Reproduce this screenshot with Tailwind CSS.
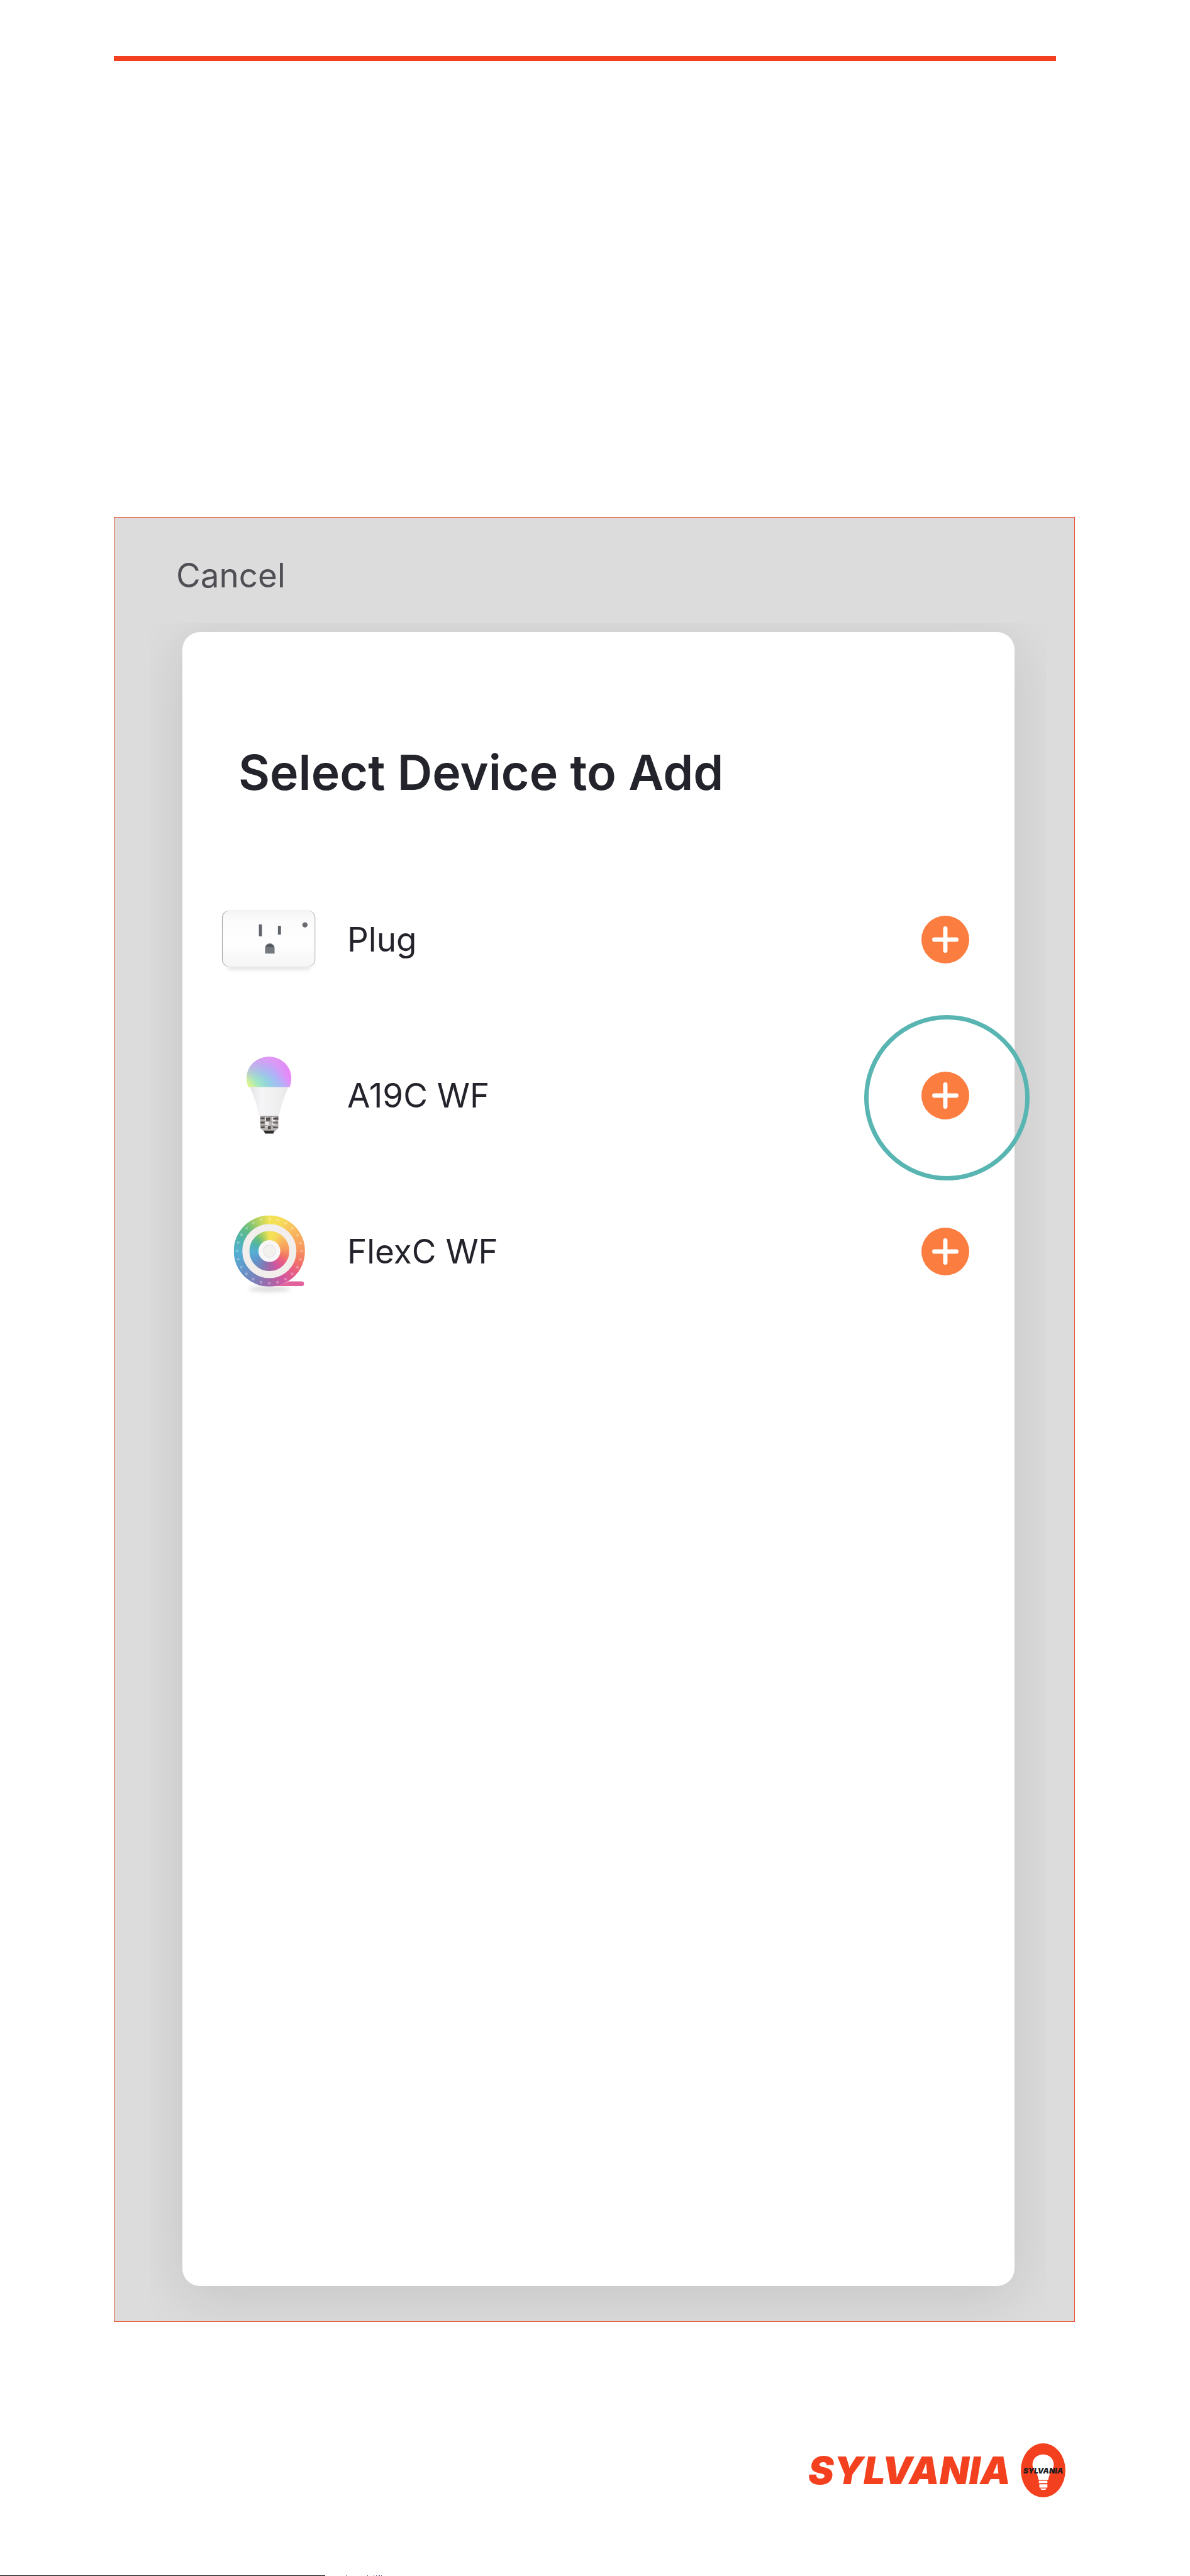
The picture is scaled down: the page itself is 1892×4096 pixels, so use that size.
<!DOCTYPE html>
<html lang="en">
<head>
    <meta charset="UTF-8">
    <meta name="viewport" content="width=device-width, initial-scale=1.0">
    <title>Select Device to Add</title>
    <script src="https://cdn.jsdelivr.net/npm/@tailwindcss/browser@4"></script>
</head>
<body class="bg-white font-['Inter',sans-serif] text-[#23232b]">
    <div class="min-h-screen flex flex-col">
        <!-- Page rule -->
        <div class="mt-[89px] ml-[181px] mr-[213px] h-2 bg-[#f3401e]"></div>

        <!-- App screen -->
        <main class="mt-[725px] ml-[181px] mr-[183px] flex-1 flex flex-col border border-[#f0492a] bg-[#dcdcdc]">
            <header class="pt-[60px] pb-[44px] pl-[98px]">
                <button type="button" class="block text-[53px] leading-[64px] text-[#4e4f54]">Cancel</button>
            </header>

            <div class="flex-1 flex flex-col ml-[57px] mr-[44px] pt-[14px] pb-[56px] pl-[51px] pr-[51px] overflow-hidden">
                <section class="flex-1 rounded-[28px] bg-white pt-[175px] shadow-[0_16px_90px_rgba(0,0,0,0.11)]">
                    <h1 class="pl-[89px] text-[77px] leading-[96px] font-semibold">Select Device to Add</h1>

                    <ul class="mt-[94px] pl-[62px] pr-[72px]">
                        <li class="h-[248px] flex items-center">
                            <svg class="w-[151px] h-[182px] shrink-0" viewBox="0 0 200 240" aria-hidden="true">
                                <defs>
                                    <linearGradient id="plugBody" x1="0" y1="0" x2="0" y2="1">
                                        <stop offset="0" stop-color="#f5f5f5"/>
                                        <stop offset="0.2" stop-color="#fcfcfc"/>
                                        <stop offset="0.6" stop-color="#fefefe"/>
                                        <stop offset="1" stop-color="#f5f5f5"/>
                                    </linearGradient>
                                    <linearGradient id="plugEdge" x1="0" y1="0" x2="1" y2="0">
                                        <stop offset="0" stop-color="#a9a9ab"/>
                                        <stop offset="0.08" stop-color="#f0f0f0"/>
                                        <stop offset="0.92" stop-color="#f0f0f0"/>
                                        <stop offset="1" stop-color="#bdbdbf"/>
                                    </linearGradient>
                                    <filter id="soft" x="-20%" y="-100%" width="140%" height="300%">
                                        <feGaussianBlur stdDeviation="4"/>
                                    </filter>
                                </defs>
                                <rect x="12" y="164" width="176" height="20" rx="8" fill="#e4e4e4" filter="url(#soft)"/>
                                <rect x="2" y="59" width="195" height="118" rx="15" fill="url(#plugBody)" stroke="url(#plugEdge)" stroke-width="1.6"/>
                                <rect x="79" y="88" width="6.5" height="25" fill="#62656c"/>
                                <rect x="119" y="91" width="6.5" height="18.5" fill="#62656c"/>
                                <path d="M92 149.500V138a10 10 0 0 1 20 0v11.500z" fill="#747980"/>
                                <path d="M93 136a9.500 9.500 0 0 1 18 0z" fill="#55585e"/>
                                <circle cx="176" cy="89" r="5.500" fill="#696b70"/>
                            </svg>
                            <span class="pl-[49px] flex-1 text-[53px] leading-[64px]">Plug</span>
                            <button type="button" aria-label="Add Plug" class="size-[76px] shrink-0">
                                <svg class="size-full" viewBox="0 0 100 100">
                                    <circle cx="50" cy="50" r="50" fill="#fb7d40"/>
                                    <path d="M50 27v46M27 50h46" stroke="#fff" stroke-width="9" stroke-linecap="round"/>
                                </svg>
                            </button>
                        </li>

                        <li class="h-[248px] flex items-center">
                            <svg class="w-[151px] h-[182px] shrink-0" viewBox="0 0 200 240" aria-hidden="true">
                                <defs>
                                    <linearGradient id="dome" x1="0" y1="0.85" x2="1" y2="0.4">
                                        <stop offset="0" stop-color="#dcf58c"/>
                                        <stop offset="0.2" stop-color="#a0e6c4"/>
                                        <stop offset="0.4" stop-color="#94d0e2"/>
                                        <stop offset="0.6" stop-color="#a9b6f7"/>
                                        <stop offset="0.8" stop-color="#df92fa"/>
                                        <stop offset="1" stop-color="#f478f4"/>
                                    </linearGradient>
                                    <linearGradient id="domeTop" x1="0.4" y1="0" x2="0.55" y2="0.7">
                                        <stop offset="0" stop-color="#e795f2" stop-opacity="0.9"/>
                                        <stop offset="1" stop-color="#c3a5f7" stop-opacity="0"/>
                                    </linearGradient>
                                    <linearGradient id="neck" x1="0" y1="0" x2="1" y2="0">
                                        <stop offset="0" stop-color="#e6e4e7"/>
                                        <stop offset="0.3" stop-color="#f5f4f6"/>
                                        <stop offset="0.7" stop-color="#f0eff0"/>
                                        <stop offset="1" stop-color="#e9e8e9"/>
                                    </linearGradient>
                                </defs>
                                <path d="M60 101h81c-2 8-6 15-9 24-4 11-8 25-11 38H79c-2-14-6-29-11-41-3-8-6-14-8-21z" fill="url(#neck)"/>
                                <path d="M56.500 102C50 84 53 66 64 54c20-21 53-21 72 0 12 13 14 32 8 48z" fill="url(#dome)"/>
                                <path d="M56.500 102C50 84 53 66 64 54c20-21 53-21 72 0 12 13 14 32 8 48z" fill="url(#domeTop)"/>
                                <path d="M82 163h38v26l-8 7H90l-8-7z" fill="#b9b6b4"/>
                                <path d="M92 163h8v23h-8zM107 163h6v19h-6z" fill="#eceaea"/>
                                <path d="M82 166h9v4h-9zM94 166h9v7h-9zM109 166h11v5h-11zM82 175h9v4h-9zM109 175h10v4h-10zM83 185h8v4h-8zM98 184h6v7h-6zM109 185h10v4h-10z" fill="#55504f"/>
                                <path d="M82 164h38M82 173l37 4M82 182l37 4" stroke="#8c8987" stroke-width="1.500"/>
                                <path d="M89 194h23l-3 6H92z" fill="#302c2c"/>
                            </svg>
                            <span class="pl-[49px] flex-1 text-[53px] leading-[64px]">A19C WF</span>
                            <div class="relative size-[76px] shrink-0">
                                <button type="button" aria-label="Add A19C WF" class="block size-full">
                                    <svg class="size-full" viewBox="0 0 100 100">
                                        <circle cx="50" cy="50" r="50" fill="#fb7d40"/>
                                        <path d="M50 27v46M27 50h46" stroke="#fff" stroke-width="9" stroke-linecap="round"/>
                                    </svg>
                                </button>
                                <!-- Callout ring -->
                                <div class="absolute -left-[91px] -top-[90px] size-[263px] rounded-full border-[7px] border-[#58b5b2] pointer-events-none"></div>
                            </div>
                        </li>

                        <li class="h-[248px] flex items-center">
                            <svg class="w-[151px] h-[182px] shrink-0" viewBox="0 0 200 240" aria-hidden="true">
                                <ellipse cx="101" cy="199" rx="44" ry="6" fill="#dcdcdc" filter="url(#soft)"/>
                                <foreignObject x="26" y="44" width="150" height="150">
                                    <div class="size-full rounded-full bg-[conic-gradient(#f4e353_0deg,#f7d95a_25deg,#f9b95e_50deg,#f7985c_85deg,#f27468_110deg,#e65c84_130deg,#d2569f_153deg,#a465a8_178deg,#7d7db8_205deg,#5f98cb_238deg,#54afd3_268deg,#4fb4ad_292deg,#63bb82_314deg,#a9cf63_336deg,#f4e353_360deg)]"></div>
                                </foreignObject>
                                <circle cx="101" cy="119" r="68" fill="none" stroke="#fff" stroke-opacity="0.28" stroke-width="6" stroke-linecap="round" stroke-dasharray="0 17.800"/>
                                <circle cx="101" cy="119" r="49.500" fill="none" stroke="#f1eeeb" stroke-width="15"/>
                                <circle cx="101" cy="119" r="23" fill="#f8f6f7"/>
                                <circle cx="101" cy="119" r="13" fill="#f3f1ee" stroke="#e3e1e3" stroke-width="1.500"/>
                                <path d="M112 193c12-2 22-6 30-10h27a5 5 0 0 1 0 10z" fill="#e2629b"/>
                            </svg>
                            <span class="pl-[49px] flex-1 text-[53px] leading-[64px]">FlexC WF</span>
                            <button type="button" aria-label="Add FlexC WF" class="size-[76px] shrink-0">
                                <svg class="size-full" viewBox="0 0 100 100">
                                    <circle cx="50" cy="50" r="50" fill="#fb7d40"/>
                                    <path d="M50 27v46M27 50h46" stroke="#fff" stroke-width="9" stroke-linecap="round"/>
                                </svg>
                            </button>
                        </li>
                    </ul>
                </section>
            </div>
        </main>

        <!-- Brand -->
        <footer class="mt-[193px]">
            <div class="mr-[198px] flex justify-end items-center gap-4">
                <span class="text-[61px] leading-[64px] font-black italic text-[#f3401e]">SYLVANIA</span>
                <svg class="w-[71px] h-[86px] shrink-0" viewBox="0 0 94 114">
                    <ellipse cx="47" cy="57" rx="47" ry="57" fill="#f3401e"/>
                    <path d="M47 23.500c13 0 22.500 9 22.500 22 0 7-5 12-8 18-2 5-3 9-4 13.500h-20c-1-4.500-2-8.500-4-13.500-3-6-9-11-9-18 0-13 9.500-22 22.500-22z" fill="#fff"/>
                    <path d="M38 79h18v5H38zM39 86.500h17v6.500l-1 .5H40l-1-.5zM41 95h13l-2 3h-9z" fill="#fff"/>
                    <text x="47" y="63" text-anchor="middle" font-size="16" font-weight="900" font-style="italic" fill="#1d1d1f">SYLVANIA</text>
                </svg>
            </div>
            <div class="mt-[124px] flex h-px">
                <div class="w-[517px] bg-black"></div>
                <svg class="ml-[32px] w-[60px] h-px" viewBox="0 0 60 1">
                    <path d="M1 0h1v1h-1zM35 0h1v1h-1zM45 0h1v1h-1zM49 0h1v1h-1zM53 0h2v1h-2zM57 0h1v1h-1z" fill="#33335a"/>
                </svg>
            </div>
        </footer>
    </div>
</body>
</html>
